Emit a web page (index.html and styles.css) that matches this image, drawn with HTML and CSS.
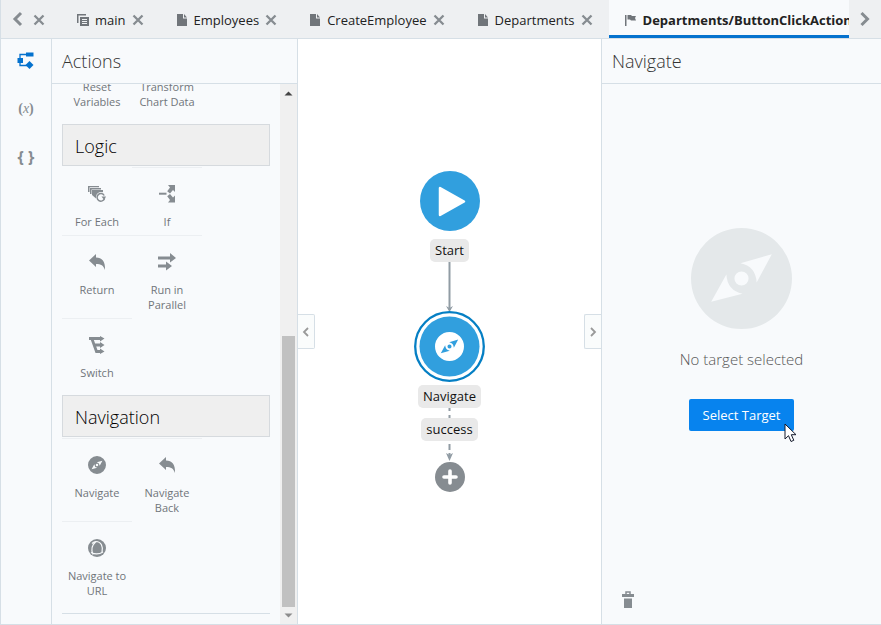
FILE: index.html
```html
<!DOCTYPE html>
<html lang="en">
<head>
<meta charset="utf-8">
<title>Action Chain Editor</title>
<link rel="stylesheet" href="styles.css">
</head>
<body>
<svg class="defs" aria-hidden="true">
  <symbol id="close" viewBox="0 0 12 12"><path d="M1.500 1.500l9 9M10.500 1.500l-9 9" fill="none" stroke="currentColor" stroke-width="2.300"/></symbol>
  <symbol id="doc" viewBox="0 0 12 14"><path d="M1 1h6v4.500h4V13H1zM8 1l3 3.500H8z" fill="currentColor"/></symbol>
  <symbol id="back" viewBox="0 0 18 18"><path d="M1 7.500L8 1v3.500c6 0 9.500 4 9 12.500C15.500 12.500 13 11 8 11v3z" fill="currentColor"/></symbol>
  <symbol id="compass" viewBox="0 0 100 100">
    <path fill="currentColor" fill-rule="evenodd" d="M50 0a50 50 0 1 1 0 100a50 50 0 1 1 0-100zM80 26L49 35Q64 38 65 54zM20 73L51 65Q36 62 35 46zM50 43a7 7 0 1 0 0 14a7 7 0 1 0 0-14z"/>
  </symbol>
</svg>
<div class="app">
  <nav class="tabbar">
    <button class="scroll" aria-label="Scroll tabs left"><svg width="12" height="16" viewBox="0 0 12 16"><path d="M10 2L4 8l6 6" fill="none" stroke="currentColor" stroke-width="3"/></svg></button>
    <div class="tabs">
      <div class="tab cut"><button class="close" aria-label="Close"><svg><use href="#close"/></svg></button></div>
      <div class="tab"><svg class="kind" viewBox="0 0 12 14"><path d="M0 1h9v1.500H1.500V10H0zM3 4h9v9H3zM5 6v1h5V6zM5 8v1h5V8zM5 10v1h5v-1z" fill="currentColor" fill-rule="evenodd"/></svg><a href="#main">main</a><button class="close" aria-label="Close main"><svg><use href="#close"/></svg></button></div>
      <div class="tab"><svg class="kind"><use href="#doc"/></svg><a href="#employees">Employees</a><button class="close" aria-label="Close Employees"><svg><use href="#close"/></svg></button></div>
      <div class="tab"><svg class="kind"><use href="#doc"/></svg><a href="#create">CreateEmployee</a><button class="close" aria-label="Close CreateEmployee"><svg><use href="#close"/></svg></button></div>
      <div class="tab"><svg class="kind"><use href="#doc"/></svg><a href="#departments">Departments</a><button class="close" aria-label="Close Departments"><svg><use href="#close"/></svg></button></div>
      <div class="tab active"><svg class="kind" viewBox="0 0 12 14"><path d="M0 2h1.500v11H0zM2.500 2H6l1 1h4L10 5l1 2.500H6l-1-1H2.500z" fill="currentColor"/></svg><a href="#action">Departments/ButtonClickAction</a></div>
    </div>
    <button class="scroll" aria-label="Scroll tabs right"><svg width="12" height="16" viewBox="0 0 12 16"><path d="M2.500 2l6 6-6 6" fill="none" stroke="currentColor" stroke-width="3"/></svg></button>
  </nav>
  <main class="work">
    <div class="rail">
      <button class="current" aria-label="Diagram"><svg width="18" height="18" viewBox="0 0 18 18"><path d="M3 8V2.500h8M3 9v4.500h8" fill="none" stroke="currentColor" stroke-width="1.300"/><path d="M9 .500h7.500v4H9zM.500 6H6v5H.500zM12.500 9l4 4-4 4-4-4z" fill="currentColor"/></svg></button>
      <button class="vars" aria-label="Variables">(<i>x</i>)</button>
      <button class="code" aria-label="Source">{ }</button>
    </div>
    <section class="actions">
      <h2>Actions</h2>
      <div class="scroller">
        <div class="list">
          <div class="content">
            <div class="items">
              <div class="item"><svg></svg><span>Reset Variables</span></div>
              <div class="item"><svg></svg><span>Transform Chart Data</span></div>
            </div>
            <h3>Logic</h3>
            <div class="items">
              <div class="item first"><svg viewBox="0 0 18 18"><path d="M0 1h11v1.300H1.500V7H0zM2 3h11v1.500H3.500V9H2zM4 5h11v2.200a5.500 5.500 0 0 0-7 6.300L4 10z" fill="currentColor"/><path d="M16.200 10.500a3.800 3.800 0 1 0 .3 3" fill="none" stroke="currentColor" stroke-width="1.500"/><path d="M13.500 11.500H18L16.200 15z" fill="currentColor"/></svg><span>For Each</span></div>
              <div class="item"><svg viewBox="0 0 18 18"><path d="M1 8.700h7.500" stroke="currentColor" stroke-width="2"/><path d="M10 0h7v7l-2-2-3 3.500-2.800-2.300L12 2.500zM10 17.400h7v-7l-2 2-3-3.500-2.800 2.300 2.800 3.700z" fill="currentColor"/></svg><span>If</span></div>
              <div class="item"><svg><use href="#back"/></svg><span>Return</span></div>
              <div class="item"><svg viewBox="0 0 18 18"><path d="M0 3.500h12V0l6 5-6 4.500v-3H0zM0 11.500h8v-3l6 4.500-6 4.500v-3H0z" fill="currentColor"/></svg><span>Run in Parallel</span></div>
              <div class="item"><svg viewBox="0 0 18 18"><path d="M1 2.500h13M4 3l4.500 12.500H14M6.500 9H14" fill="none" stroke="currentColor" stroke-width="2.800"/><path d="M12 0l4.500 2.500L12 5.500zM12 6l4.500 3-4.500 3zM12 12.500l4.500 3-4.500 2.500z" fill="currentColor"/></svg><span>Switch</span></div>
            </div>
            <h3>Navigation</h3>
            <div class="items">
              <div class="item"><svg><use href="#compass"/></svg><span>Navigate</span></div>
              <div class="item"><svg><use href="#back"/></svg><span>Navigate Back</span></div>
              <div class="item"><svg viewBox="0 0 18 18"><circle cx="9" cy="9" r="9" fill="currentColor"/><path d="M8 2.500C4 6 3 11 5 15.500M8 2.500c5 0 7.500 5 6 11M3 13.500c4 2 8 2 12-.500M4 4.500c1-1 2.500-2 4-2" fill="none" stroke="#f8fafc" stroke-width="1.200"/></svg><span>Navigate to URL</span></div>
            </div>
            <hr>
          </div>
        </div>
        <div class="scrollbar" aria-hidden="true">
          <svg viewBox="0 0 17 17"><path d="M4.500 11.500h8l-4-4z" fill="#444"/></svg>
          <div class="track"><div class="thumb"></div></div>
          <svg viewBox="0 0 17 17"><path d="M4.500 6.500h8l-4 4z" fill="#8c8c8c"/></svg>
        </div>
      </div>
    </section>
    <section class="canvas">
      <button class="fold left" aria-label="Collapse actions"><svg viewBox="0 0 8 10"><path d="M6 1L2 5l4 4" fill="none" stroke="currentColor" stroke-width="1.800"/></svg></button>
      <button class="fold right" aria-label="Collapse properties"><svg viewBox="0 0 8 10"><path d="M2 1l4 4-4 4" fill="none" stroke="currentColor" stroke-width="1.800"/></svg></button>
      <svg class="start" viewBox="0 0 60 60"><circle cx="30" cy="30" r="30" fill="#319fde"/><path d="M20 17v27l24-13.500z" fill="#fff" stroke="#fff" stroke-width="2.500" stroke-linejoin="round"/></svg>
      <span class="label">Start</span>
      <svg class="link" width="9" height="50" viewBox="0 0 9 50"><path d="M4.500 0v48" stroke="#919ca4" stroke-width="2"/><path d="M1 44l3.500 2L8 44l-3.500 6z" fill="#919ca4"/></svg>
      <svg class="step" viewBox="0 0 71 71"><circle cx="35.500" cy="35.500" r="34.300" fill="#fff" stroke="#057fc4" stroke-width="2.300"/><circle cx="35.500" cy="35.500" r="30" fill="#319fde"/><use href="#compass" x="21" y="21" width="29" height="29" color="#fff"/></svg>
      <span class="label">Navigate</span>
      <svg width="9" height="10" viewBox="0 0 9 10"><path d="M4.500 0v3M4.500 7v3" stroke="#919ca4" stroke-width="2"/></svg>
      <span class="label">success</span>
      <svg width="9" height="21" viewBox="0 0 9 21"><path d="M4.500 3v6M4.500 12v5" stroke="#919ca4" stroke-width="2"/><path d="M1 12l3.500 2L8 12l-3.500 8z" fill="#919ca4"/></svg>
      <button class="add" aria-label="Add action"><svg viewBox="0 0 30 30"><circle cx="15" cy="15" r="15" fill="#868c91"/><path d="M15 9v12M9 15h12" stroke="#fff" stroke-width="3.600" stroke-linecap="round"/></svg></button>
    </section>
    <aside class="props">
      <h2>Navigate</h2>
      <div class="empty">
        <svg class="big"><use href="#compass"/></svg>
        <p>No target selected</p>
        <div class="target">
          <button>Select Target</button>
          <svg class="pointer" viewBox="0 0 13 20"><path d="M1 1v15l3.500-3.300L7 18.500l2.800-1.200-2.500-5.600H12z" fill="#fff" stroke="#151a2c"/></svg>
        </div>
      </div>
      <div class="foot"><button aria-label="Delete"><svg width="12" height="17" viewBox="0 0 12 17"><path d="M4 3V1h4v2" fill="none" stroke="currentColor" stroke-width="1.500"/><path d="M0 3h12v3H0zM2 7.500h8V17H2z" fill="currentColor"/></svg></button></div>
    </aside>
  </main>
</div>
</body>
</html>
```

FILE: styles.css
```css
* { box-sizing: border-box; }
body {
  margin: 0;
  font: 13px/20px "Open Sans", "Noto Sans", sans-serif;
  color: #222;
  background: #fff;
}
button {
  display: grid;
  place-items: center;
  padding: 0;
  border: 0;
  background: none;
  font: inherit;
  color: #868c91;
}
svg { display: block; flex: none; }
.defs { position: absolute; width: 0; height: 0; }
h2, h3, p { margin: 0; font-weight: 400; }

.app {
  display: flex;
  flex-direction: column;
  height: 100vh;
  border: solid #d6dfe6;
  border-width: 0 0 1px 1px;
}

.tabbar {
  display: flex;
  flex: none;
  height: 39px;
  background: #eef0f2;
  border-bottom: 1px solid #d6dfe6;
}
.scroll { flex: none; width: 32px; }
.tabs { display: flex; flex: 1; min-width: 0; overflow: hidden; }
.tab {
  display: flex;
  flex: none;
  align-items: center;
  gap: 6px;
  padding: 2px 16px 0;
}
.tab.cut { padding-left: 0; }
.tab a { color: inherit; text-decoration: none; }
.tab .kind { width: 12px; height: 14px; color: #70757a; }
.close svg { width: 12px; height: 12px; }
.tab.active {
  background: #f8fafc;
  border-bottom: 3px solid #0572ce;
  padding-top: 5px;
  font-weight: 700;
}

.work {
  display: grid;
  grid-template-columns: 51px 246px 1fr 280px;
  flex: 1;
  min-height: 0;
}
.rail, .actions { background: #f8fafc; border-right: 1px solid #d6dfe6; }
.rail {
  display: flex;
  flex-direction: column;
  align-items: center;
  gap: 24px;
  padding-top: 10px;
}
.rail button { width: 24px; height: 24px; }
.rail .current { color: #0572ce; }
.rail .vars { display: block; font: 700 14px/24px "Liberation Serif", serif; }
.rail .vars i { font-weight: 400; }
.rail .code { font-weight: 700; font-size: 16px; white-space: nowrap; }

h2 {
  flex: none;
  height: 45px;
  padding: 0 10px;
  font-size: 18px;
  font-weight: 300;
  line-height: 45px;
  color: #333;
  border-bottom: 1px solid #d6dfe6;
}
.actions { display: flex; flex-direction: column; min-height: 0; }
.scroller { display: flex; flex: 1; min-height: 0; }
.list {
  display: flex;
  flex: 1;
  flex-direction: column;
  justify-content: flex-end;
  overflow: hidden;
  padding: 0 10px 10px;
}
.content { flex: none; }
h3 {
  height: 42px;
  margin: 9px 0 1px;
  padding: 0 12px;
  border: 1px solid #d6dade;
  background: #efefef;
  font-size: 18px;
  font-weight: 300;
  line-height: 42px;
  color: #000;
}
.items { display: grid; grid-template-columns: 70px 70px; }
.item {
  display: flex;
  flex-direction: column;
  align-items: center;
  gap: 11px;
  padding: 17px 5px 6px;
  border-top: 1px solid #eceff2;
  font-size: 11px;
  line-height: 15px;
  text-align: center;
  color: #70757a;
}
.item.first { border-color: transparent; }
.item svg { width: 18px; height: 18px; color: #868c91; }
hr { margin: 9px 0 0; border: 0; border-top: 1px solid #d6dfe6; }

.scrollbar { display: flex; flex-direction: column; width: 17px; background: #f0f0f0; }
.scrollbar svg { width: 17px; height: 17px; }
.track { display: flex; flex: 1; flex-direction: column; justify-content: flex-end; padding: 0 2px; }
.thumb { height: 53.5%; background: #c1c1c1; }

.canvas {
  position: relative;
  display: flex;
  flex-direction: column;
  align-items: center;
  padding-top: 132px;
}
.start { width: 60px; height: 60px; margin-bottom: 8px; }
.step { width: 71px; height: 71px; margin: -1px 0 3px; }
.label {
  padding: 0 5px;
  border-radius: 5px;
  background: #e9e9e9;
  line-height: 23px;
  color: #111;
}
.add svg { width: 30px; height: 30px; }
.fold {
  position: absolute;
  top: 275px;
  width: 17px;
  height: 35px;
  border: 1px solid #d6dfe6;
  background: #fafcfc;
  color: #999;
}
.fold svg { width: 8px; height: 10px; }
.fold.left { left: 0; border-left: 0; border-radius: 0 2px 2px 0; }
.fold.right { right: 0; border-right: 0; border-radius: 2px 0 0 2px; }

.props {
  display: flex;
  flex-direction: column;
  background: #f8fafc;
  border-left: 1px solid #d6dfe6;
}
.empty {
  display: flex;
  flex: 1;
  flex-direction: column;
  align-items: center;
  padding-top: 144px;
}
.big { width: 101px; height: 101px; color: #e4e8ea; }
.empty p { margin: 19px 0 29px; font-size: 15px; line-height: 22px; font-weight: 300; color: #555; }
.target { position: relative; }
.target button {
  height: 32px;
  padding: 0 14px;
  border-radius: 2px;
  background: #0783ee;
  color: #fff;
}
.pointer { position: absolute; left: 95px; top: 24px; width: 13px; height: 20px; }
.foot { padding: 0 20px 16px; }
```
